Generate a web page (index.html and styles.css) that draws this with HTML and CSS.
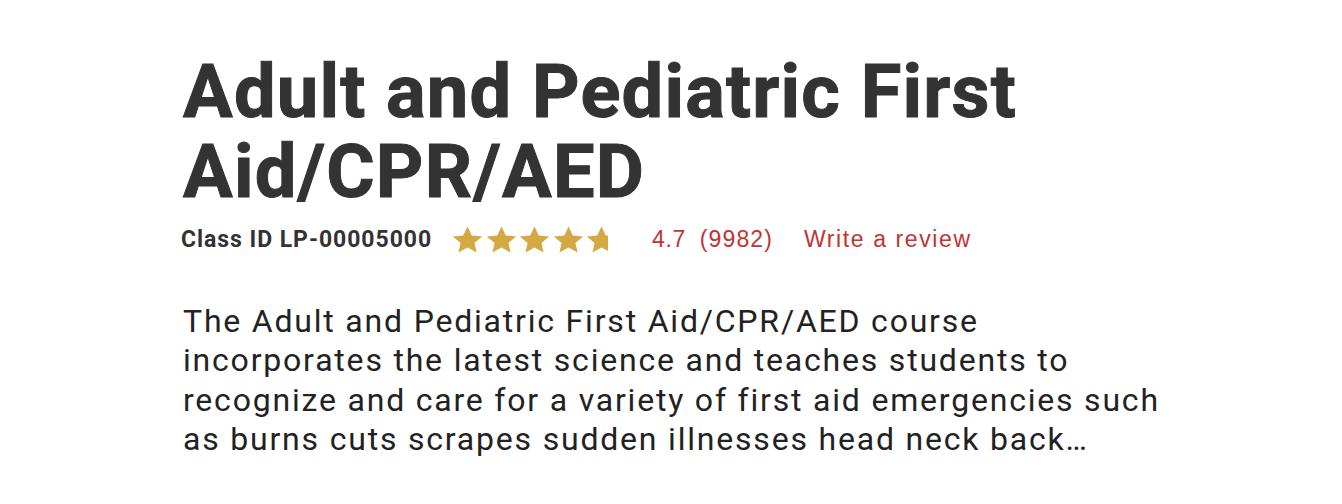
FILE: index.html
```html
<!DOCTYPE html>
<html lang="en">
<head>
<meta charset="utf-8">
<title>Adult and Pediatric First Aid/CPR/AED</title>
<link rel="stylesheet" href="styles.css">
</head>
<body>
<main class="course">
  <h1 class="course-title">Adult and Pediatric First Aid/CPR/AED</h1>
  <div class="meta">
    <span class="class-id">Class ID LP-00005000</span>
    <span class="stars" aria-label="4.7 out of 5 stars">
      <svg class="star" viewBox="0 0 32 30" preserveAspectRatio="none"><path d="M16 0.5L20.41 10.43L31.22 11.56L23.13 18.82L25.4 29.44L16 24L6.6 29.44L8.87 18.82L0.78 11.56L11.59 10.43Z"/></svg>
      <svg class="star" viewBox="0 0 32 30" preserveAspectRatio="none"><path d="M16 0.5L20.41 10.43L31.22 11.56L23.13 18.82L25.4 29.44L16 24L6.6 29.44L8.87 18.82L0.78 11.56L11.59 10.43Z"/></svg>
      <svg class="star" viewBox="0 0 32 30" preserveAspectRatio="none"><path d="M16 0.5L20.41 10.43L31.22 11.56L23.13 18.82L25.4 29.44L16 24L6.6 29.44L8.87 18.82L0.78 11.56L11.59 10.43Z"/></svg>
      <svg class="star" viewBox="0 0 32 30" preserveAspectRatio="none"><path d="M16 0.5L20.41 10.43L31.22 11.56L23.13 18.82L25.4 29.44L16 24L6.6 29.44L8.87 18.82L0.78 11.56L11.59 10.43Z"/></svg>
      <svg class="star" viewBox="0 0 32 30" preserveAspectRatio="none"><defs><clipPath id="part"><rect x="0" y="0" width="22.8" height="30"/></clipPath></defs><path clip-path="url(#part)" d="M16 0.5L20.41 10.43L31.22 11.56L23.13 18.82L25.4 29.44L16 24L6.6 29.44L8.87 18.82L0.78 11.56L11.59 10.43Z"/></svg>
    </span>
    <span class="rating-value">4.7</span>
    <span class="rating-count">(9982)</span>
    <a class="review-link" href="#">Write a review</a>
  </div>
  <p class="description">The Adult and Pediatric First Aid/CPR/AED course incorporates the latest science and teaches students to recognize and care for a variety of first aid emergencies such as burns cuts scrapes sudden illnesses head neck back…</p>
</main>
</body>
</html>
```

FILE: styles.css
```css
html, body {
  margin: 0;
  padding: 0;
  background: #ffffff;
}

body {
  font-family: Roboto, "Liberation Sans", Arial, sans-serif;
  color: #333333;
}

.course {
  padding: 52px 0 0 183px;
  width: 1000px;
}

.course-title {
  margin: 0;
  font-family: Roboto, sans-serif;
  font-weight: 700;
  font-size: 74px;
  line-height: 80px;
  letter-spacing: 1.2px;
  -webkit-text-stroke: 1px #333333;
  color: #333333;
  width: 900px;
}

.meta {
  display: flex;
  align-items: center;
  margin-top: 9px;
  height: 36px;
}

.class-id {
  font-family: Roboto, sans-serif;
  font-weight: 700;
  font-size: 23px;
  letter-spacing: 0.95px;
  color: #333333;
  margin-left: -2px;
}

.stars {
  display: flex;
  gap: 2.5px;
  margin-left: 20px;
}

.star {
  width: 31px;
  height: 27px;
  fill: #d4a843;
}

.rating-value,
.rating-count,
.review-link {
  font-family: "Liberation Sans", Arial, sans-serif;
  font-size: 23px;
  color: #c03434;
  letter-spacing: 0.6px;
  text-decoration: none;
}

.rating-value {
  margin-left: 35px;
}

.rating-count {
  margin-left: 14px;
  letter-spacing: 1.1px;
}

.review-link {
  margin-left: 31px;
  letter-spacing: 1.6px;
}

.description {
  margin: 45px 0 0;
  font-family: Roboto, sans-serif;
  font-size: 32px;
  line-height: 39.3px;
  letter-spacing: 1.8px;
  color: #222222;
  width: 990px;
}
```
